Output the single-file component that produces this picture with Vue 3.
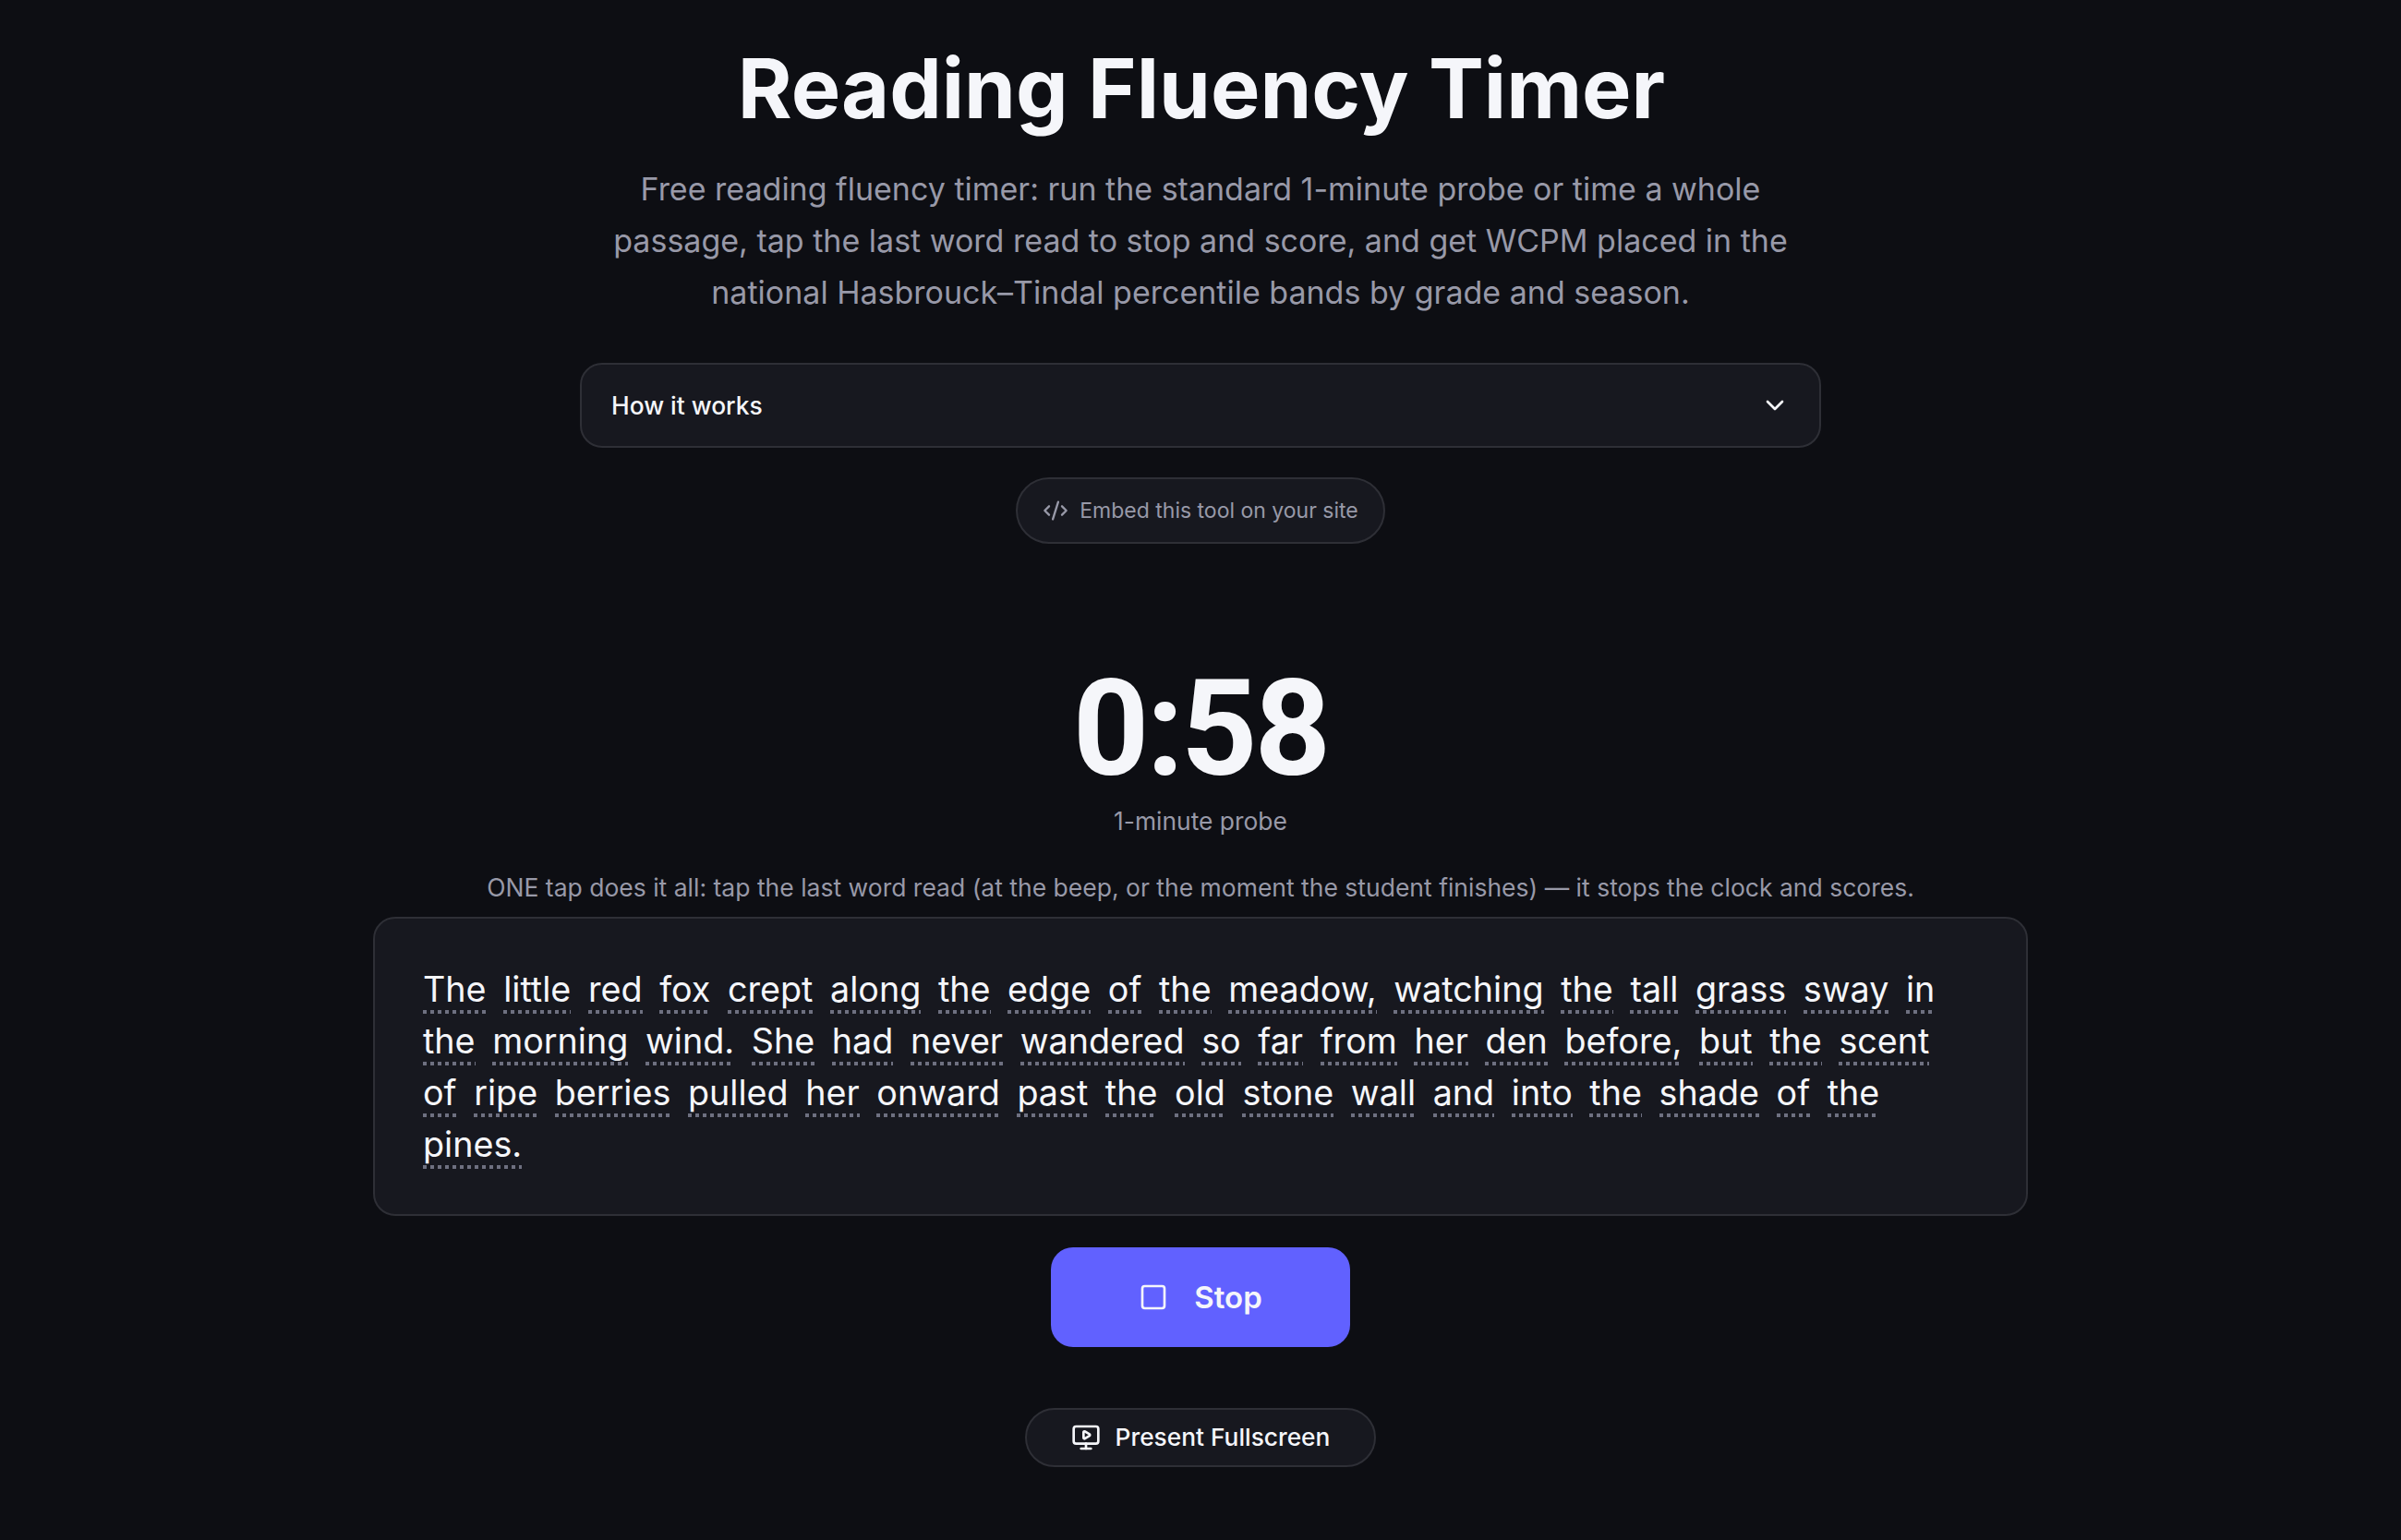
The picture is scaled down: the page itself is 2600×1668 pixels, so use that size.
<script setup>
const passage = "The little red fox crept along the edge of the meadow, watching the tall grass sway in the morning wind. She had never wandered so far from her den before, but the scent of ripe berries pulled her onward past the old stone wall and into the shade of the pines.";
const words = passage.split(" ");
</script>

<template>
  <main class="page">
    <h1 class="title">Reading Fluency Timer</h1>
    <p class="lead">
      Free reading fluency timer: run the standard 1-minute probe or time a whole<br />
      passage, tap the last word read to stop and score, and get WCPM placed in the<br />
      national Hasbrouck–Tindal percentile bands by grade and season.
    </p>
    <div class="how">
      <span>How it works</span>
      <svg class="chev" viewBox="0 0 24 24"><path d="m6 9 6 6 6-6" /></svg>
    </div>
    <button class="embed">
      <svg class="embed-icon" viewBox="0 0 24 24">
        <path d="m18 16 4-4-4-4" /><path d="m6 8-4 4 4 4" /><path d="m14.5 4-5 16" />
      </svg>
      Embed this tool on your site
    </button>
    <div class="clock">0:58</div>
    <div class="mode">1-minute probe</div>
    <p class="hint">ONE tap does it all: tap the last word read (at the beep, or the moment the student finishes) — it stops the clock and scores.</p>
    <div class="passage">
      <template v-for="(w, i) in words" :key="i"><span class="word">{{ w }}</span>{{ " " }}</template>
    </div>
    <button class="stop">
      <svg class="stop-icon" viewBox="0 0 24 24"><rect x="3" y="3" width="18" height="18" rx="2" /></svg>
      Stop
    </button>
    <button class="present">
      <svg class="present-icon" viewBox="0 0 24 24">
        <path d="M10 7.75a.75.75 0 0 1 1.142-.638l3.664 2.249a.75.75 0 0 1 0 1.278l-3.664 2.25a.75.75 0 0 1-1.142-.64z" />
        <path d="M12 17v4" /><path d="M8 21h8" />
        <rect x="2" y="3" width="20" height="14" rx="2" />
      </svg>
      Present Fullscreen
    </button>
  </main>
</template>

<style>
html, body { background: #0d0e13; }
</style>

<style scoped>
.page {
  min-height: 1668px;
  box-sizing: border-box;
  display: flex;
  flex-direction: column;
  align-items: center;
  padding-top: 48px;
  font-family: "Inter", "Liberation Sans", sans-serif;
  color: #f5f6fa;
}
svg { fill: none; stroke: currentColor; stroke-linecap: round; stroke-linejoin: round; stroke-width: 2; display: block; flex: none; }
button { font-family: inherit; cursor: pointer; display: flex; align-items: center; justify-content: center; }
.title {
  margin: 0 0 0 2px;
  font-size: 89.8px;
  line-height: 96px;
  font-weight: 700;
  text-align: center;
}
.lead {
  margin: 33px 0 0;
  font-size: 34px;
  line-height: 56.2px;
  color: #9899a8;
  text-align: center;
}
.how {
  margin-top: 47px;
  width: 1344px;
  height: 92px;
  box-sizing: border-box;
  border: 2px solid #2e2f36;
  border-radius: 24px;
  background: #17181f;
  padding: 0 32px;
  display: flex;
  align-items: center;
  justify-content: space-between;
  font-size: 26.4px;
  font-weight: 450;
}
.chev { width: 32px; height: 32px; }
.embed {
  margin-top: 32px;
  width: 400px;
  height: 72px;
  border: 2px solid #2e2f36;
  border-radius: 36px;
  background: #17181f;
  color: #9899a8;
  font-size: 23px;
  gap: 12px;
}
.embed-icon { width: 28px; height: 28px; }
.clock {
  margin-top: 129px;
  font-family: "Roboto", "Inter", sans-serif;
  font-size: 144px;
  line-height: 144px;
  font-weight: 700;
  letter-spacing: -3px;
}
.mode {
  margin-top: 7px;
  font-size: 26.4px;
  line-height: 40px;
  color: #9899a8;
}
.hint {
  margin: 32px 0 0;
  font-size: 26.5px;
  line-height: 40px;
  color: #9899a8;
  text-align: center;
}
.passage {
  margin-top: 12px;
  width: 1792px;
  height: 324px;
  box-sizing: border-box;
  border: 2px solid #2e2f36;
  border-radius: 24px;
  background: #17181f;
  padding: 48px 60px 48px 52px;
  font-size: 37.7px;
  line-height: 56px;
  color: #f5f6fa;
  word-spacing: 8px;
}
.word {
  padding-bottom: 4px;
  background-image: repeating-linear-gradient(90deg, #6e7080 0 4px, transparent 4px 8px);
  background-repeat: no-repeat;
  background-position: left bottom;
  background-size: 100% 4px;
}
.stop {
  margin-top: 34px;
  width: 324px;
  height: 108px;
  border: none;
  border-radius: 24px;
  background: #6161ff;
  color: #f5f6fa;
  font-size: 33px;
  font-weight: 600;
  gap: 28px;
}
.stop-icon { width: 32px; height: 32px; }
.present {
  margin-top: 66px;
  width: 380px;
  height: 64px;
  border: 2px solid #2e2f36;
  border-radius: 32px;
  background: #17181f;
  color: #f5f6fa;
  font-size: 26.3px;
  font-weight: 450;
  gap: 16px;
}
.present-icon { width: 32px; height: 32px; }
</style>
